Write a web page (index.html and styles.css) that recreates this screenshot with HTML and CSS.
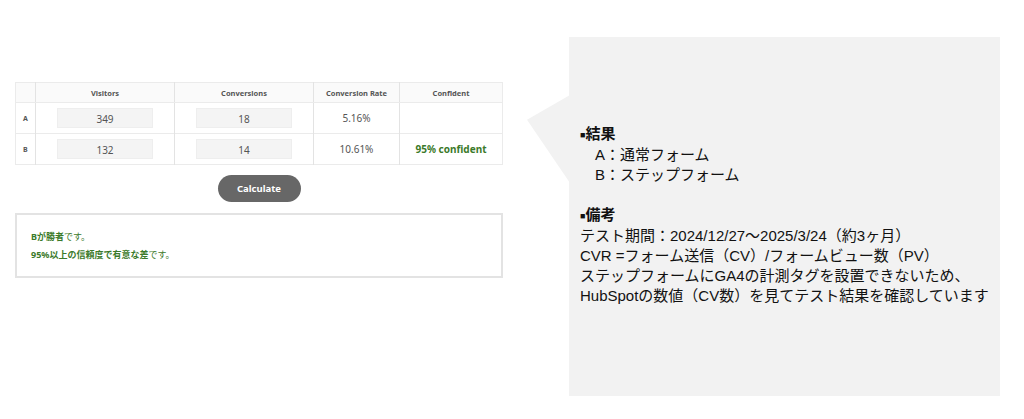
FILE: index.html
```html
<!DOCTYPE html>
<html lang="ja">
  <head>
    <meta charset="UTF-8" />
    <meta content="width=device-width, initial-scale=1.0" name="viewport" />
    <link rel="stylesheet" href="styles.css">
  </head>
  <body>
    <div class="page">
      <div class="calc">
        <table class="ab-table">
          <tr class="head">
            <th class="label"></th>
            <th class="col-v">Visitors</th>
            <th class="col-c">Conversions</th>
            <th class="col-r">Conversion Rate</th>
            <th>Confident</th>
          </tr>
          <tr>
            <td class="label">A</td>
            <td><div class="num-box">349</div></td>
            <td><div class="num-box">18</div></td>
            <td>5.16%</td>
            <td></td>
          </tr>
          <tr>
            <td class="label">B</td>
            <td><div class="num-box">132</div></td>
            <td><div class="num-box">14</div></td>
            <td>10.61%</td>
            <td class="win">95% confident</td>
          </tr>
        </table>

        <div class="btn-row">
          <span class="calc-btn">Calculate</span>
        </div>

        <div class="result">
          <p><b>Bが勝者</b>です。</p>
          <p><b>95%以上の信頼度で有意な差</b>です。</p>
        </div>
      </div>

      <div class="note">
        <p class="note-title"><span class="sq">■</span>結果</p>
        <p class="indent">A：通常フォーム</p>
        <p class="indent">B：ステップフォーム</p>
        <p class="note-title gap"><span class="sq">■</span>備考</p>
        <p>テスト期間：2024/12/27〜2025/3/24（約3ヶ月）</p>
        <p>CVR =フォーム送信（CV）/フォームビュー数（PV）</p>
        <p>ステップフォームにGA4の計測タグを設置できないため、</p>
        <p>HubSpotの数値（CV数）を見てテスト結果を確認しています</p>
      </div>
    </div>
  </body>
</html>
```

FILE: styles.css
```css
body {
  margin: 0;
  background: #fff;
  font-family: "Noto Sans", "Noto Sans CJK JP", sans-serif;
}
.page {
  display: flex;
  align-items: flex-start;
  padding: 37px 24px 0 15px;
  gap: 66px;
}
.calc {
  width: 488px;
  margin-top: 45px;
}
.ab-table {
  width: 100%;
  border-collapse: collapse;
  border: 1px solid #ebebeb;
  color: #555;
  font-size: 10px;
}
.ab-table th {
  height: 19px;
  font-size: 7.5px;
  font-weight: bold;
  color: #555;
  background: #fafafa;
  border-bottom: 1px solid #ebebeb;
  border-left: 1px solid #e3e3e3;
  padding: 0;
}
.ab-table td {
  height: 30px;
  text-align: center;
  border-top: 1px solid #ebebeb;
  border-left: 1px solid #e3e3e3;
  padding: 0;
}
.ab-table .label {
  width: 20px;
  font-size: 7px;
  font-weight: bold;
  text-align: left;
  padding-left: 7px;
  border-left: none;
  box-sizing: border-box;
}
.ab-table th.label {
  background: #fafafa;
}
.col-v { width: 138px; }
.col-c { width: 138px; }
.col-r { width: 85px; }
.num-box {
  width: 96px;
  height: 20px;
  line-height: 20px;
  margin: 0 auto;
  background: #f4f4f4;
  border: 1px solid #eee;
  box-sizing: border-box;
}
.win {
  color: #3b7a2a;
  font-weight: bold;
}
.btn-row {
  display: flex;
  justify-content: center;
  margin-top: 10px;
}
.calc-btn {
  width: 83px;
  height: 27px;
  line-height: 27px;
  border-radius: 14px;
  background: #676767;
  color: #fff;
  font-size: 9.5px;
  font-weight: bold;
  text-align: center;
}
.result {
  margin-top: 11px;
  height: 65px;
  border: 2px solid #e3e3e3;
  box-sizing: border-box;
  padding: 16px 0 0 14px;
  font-size: 9px;
  color: #3b7a2a;
}
.result p {
  margin: 0 0 6px;
  line-height: 12px;
}
.result b {
  font-weight: bold;
}
.note {
  position: relative;
  flex: 1;
  height: 359px;
  background: #f2f2f2;
  padding: 87px 0 0 11px;
  box-sizing: border-box;
  font-family: "Liberation Sans", "Noto Sans CJK JP", sans-serif;
  font-size: 15px;
  color: #111;
}
.note::before {
  content: "";
  position: absolute;
  left: -42px;
  top: 58px;
  width: 43px;
  height: 88px;
  background: #f2f2f2;
  clip-path: polygon(100% 0, 0 28%, 100% 100%);
}
.note p {
  margin: 0;
  line-height: 20px;
  white-space: nowrap;
}
.note .note-title {
  font-weight: bold;
}
.note .sq {
  font-size: 9px;
  vertical-align: 1px;
}
.note .indent {
  padding-left: 15px;
}
.note .gap {
  margin-top: 20px;
}
```
